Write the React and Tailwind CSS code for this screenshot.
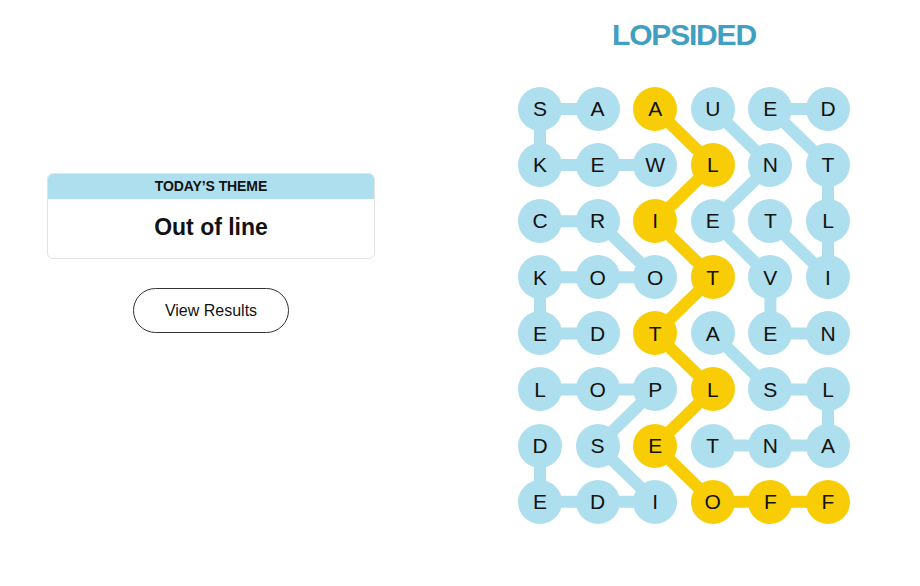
import React from 'react';

const LETTERS = [
  'SAAUED',
  'KEWLNT',
  'CRIETL',
  'KOOTVI',
  'EDTAEN',
  'LOPLSL',
  'DSETNA',
  'EDIOFF',
];

// spangram cells
const GOLD = ['0,2', '1,3', '2,2', '3,3', '4,2', '5,3', '6,2', '7,3', '7,4', '7,5'];

// found words, as paths of [row, col]
const WORDS = [
  { gold: false, path: [[0, 1], [0, 0], [1, 0], [1, 1], [1, 2]] }, // ASKEW
  { gold: false, path: [[0, 3], [1, 4], [2, 3], [3, 4], [4, 4], [4, 5]] }, // UNEVEN
  { gold: false, path: [[2, 4], [3, 5], [2, 5], [1, 5], [0, 4], [0, 5]] }, // TILTED
  { gold: false, path: [[2, 0], [2, 1], [3, 2], [3, 1], [3, 0], [4, 0], [4, 1]] }, // CROOKED
  { gold: false, path: [[4, 3], [5, 4], [5, 5], [6, 5], [6, 4], [6, 3]] }, // ASLANT
  { gold: false, path: [[5, 0], [5, 1], [5, 2], [6, 1], [7, 2], [7, 1], [7, 0], [6, 0]] }, // LOPSIDED
  { gold: true, path: [[0, 2], [1, 3], [2, 2], [3, 3], [4, 2], [5, 3], [6, 2], [7, 3], [7, 4], [7, 5]] }, // ALITTLEOFF
];

const COL = 57.6;
const ROW = 56.1;
const R = 22;

const pt = ([r, c]) => `${R + c * COL},${R + r * ROW}`;

const Board = () => (
  <div className="relative">
    <svg className="absolute inset-0" width="332" height="437" viewBox="0 0 332 437">
      {WORDS.map((w, i) => (
        <polyline
          key={i}
          points={w.path.map(pt).join(' ')}
          fill="none"
          stroke={w.gold ? '#f8cd05' : '#aedfee'}
          strokeWidth="12"
          strokeLinejoin="round"
          strokeLinecap="round"
        />
      ))}
    </svg>
    <div className="relative grid grid-cols-[repeat(6,44px)] auto-rows-[44px] gap-x-[13.6px] gap-y-[12.1px]">
      {LETTERS.map((row, r) =>
        row.split('').map((ch, c) => (
          <div
            key={`${r}-${c}`}
            className={`w-[44px] h-[44px] rounded-full flex items-center justify-center text-[21px] text-[#121212] ${
              GOLD.includes(`${r},${c}`) ? 'bg-[#f8cd05]' : 'bg-[#aedfee]'
            }`}
          >
            {ch}
          </div>
        ))
      )}
    </div>
  </div>
);

export default function App() {
  return (
    <div className="w-[920px] h-[586px] bg-white flex font-['Liberation_Sans',Arial,sans-serif] text-[#121212]">
      <div className="w-[422px] px-[47px] pt-[173px] flex flex-col items-center">
        <div className="w-full rounded-md border border-[#e4e4e4] overflow-hidden">
          <div className="h-[25px] bg-[#aedfee] flex items-center justify-center text-[14px] font-bold tracking-[-0.1px]">
            TODAY’S THEME
          </div>
          <div className="h-[59px] flex items-center justify-center text-[23px] font-bold pb-[2px]">
            Out of line
          </div>
        </div>
        <button className="mt-[29px] w-[156px] h-[45px] rounded-full border border-[#333] text-[16px] text-[#121212] bg-white">
          View Results
        </button>
      </div>
      <div className="pl-[96px] pt-[20px]">
        <div className="flex flex-col items-center">
          <h1 className="text-[30px] leading-none font-bold tracking-[-1.2px] text-[#3fa0c2]">
            LOPSIDED
          </h1>
          <div className="mt-[37px]">
            <Board />
          </div>
        </div>
      </div>
    </div>
  );
}
